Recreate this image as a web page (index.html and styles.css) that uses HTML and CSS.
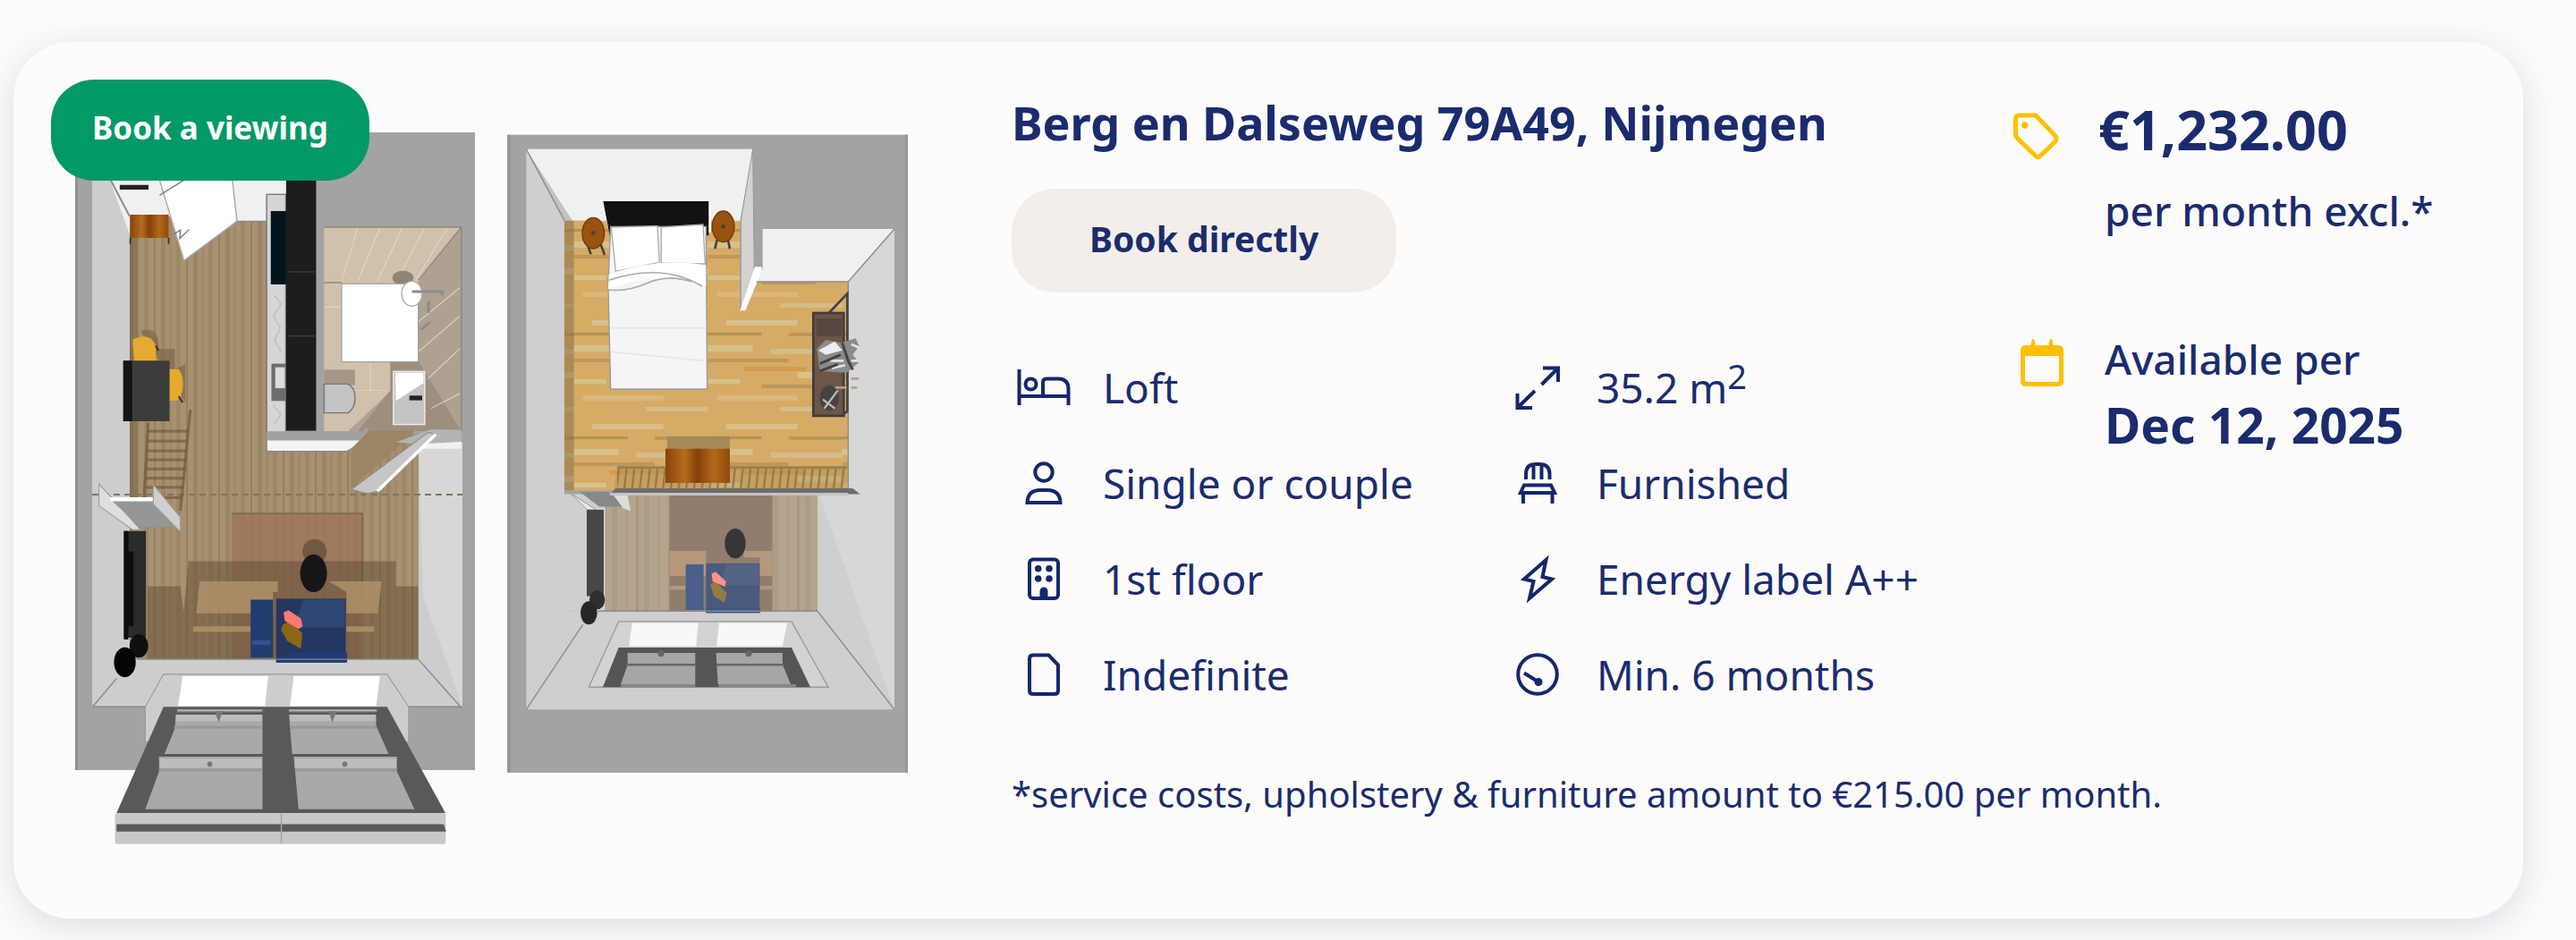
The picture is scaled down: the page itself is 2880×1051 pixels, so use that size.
FILE: index.html
```html
<!DOCTYPE html>
<html lang="en">
<head>
    <meta charset="UTF-8">
    <meta name="viewport" content="width=device-width, initial-scale=1.0">
    <title>Berg en Dalseweg 79A49, Nijmegen</title>
    <link rel="stylesheet" href="styles.css">
</head>
<body>
<article class="card">
    <div class="media">
        <svg class="floorplan" viewBox="57 89 1032 896" role="img" aria-label="Floor plan">
            <defs>
                <pattern id="oak" width="36" height="90" patternUnits="userSpaceOnUse">
                    <rect width="36" height="90" fill="#a89170"/>
                    <rect width="5" height="90" fill="#9b8564"/>
                    <rect x="9" width="3" height="90" fill="#a08a69"/>
                    <rect x="17" width="5" height="90" fill="#9d8766"/>
                    <rect x="28" width="2" height="90" fill="#94805f"/>
                </pattern>
                <pattern id="oak-light" width="36" height="90" patternUnits="userSpaceOnUse" patternTransform="scale(3)">
                    <rect width="36" height="90" fill="#b5a48d"/>
                    <rect width="6" height="90" fill="#ad9c84"/>
                    <rect x="15" width="4" height="90" fill="#b09f88"/>
                    <rect x="27" width="3" height="90" fill="#a9977f"/>
                </pattern>
                <pattern id="parquet" width="150" height="116" patternUnits="userSpaceOnUse" patternTransform="translate(305 0) scale(3)">
                    <rect width="150" height="116" fill="#d5ab66"/>
                    <rect x="20" y="6" width="80" height="6" fill="#d6bf8c"/>
                    <rect y="20" width="60" height="3" fill="#b49256"/>
                    <rect x="90" y="20" width="60" height="4" fill="#bd9759"/>
                    <rect y="34" width="50" height="7" fill="#d8c08a"/>
                    <rect x="70" y="38" width="80" height="6" fill="#d3bd88"/>
                    <rect y="49" width="90" height="4" fill="#bf9858"/>
                    <rect x="40" y="58" width="70" height="5" fill="#d39c4c"/>
                    <rect x="100" y="64" width="50" height="7" fill="#dbc189"/>
                    <rect y="72" width="36" height="5" fill="#d8c28d"/>
                    <rect x="60" y="78" width="60" height="4" fill="#bc965b"/>
                    <rect x="10" y="90" width="90" height="6" fill="#dab77a"/>
                    <rect x="80" y="103" width="70" height="5" fill="#d5bd84"/>
                </pattern>
                <pattern id="rail" y="1208" width="26" height="72" patternUnits="userSpaceOnUse">
                    <path d="M6 72 14 0" stroke="#8d7446" stroke-width="6"/>
                </pattern>
                <linearGradient id="wood" x1="0" x2="1" y1="0" y2="0">
                    <stop offset="0" stop-color="#8a4308"/>
                    <stop offset=".3" stop-color="#b56c1f"/>
                    <stop offset=".5" stop-color="#84400a"/>
                    <stop offset=".75" stop-color="#b4681b"/>
                    <stop offset="1" stop-color="#8e4a0d"/>
                </linearGradient>
            </defs>

            <!-- Ground floor: shell -->
            <rect x="84" y="148" width="447" height="713" fill="#a3a3a3"/>
            <rect x="84" y="148" width="3" height="713" fill="#919191"/>
            <path d="M103 148H145V737H468V495H517V790H103Z" fill="#cdcdcd"/>
            <path d="M468 495H517V790L473 666Z" fill="#d7d7d7"/>
            <path d="M123 202H320V262H145Z" fill="#f0f0f0"/>
            <path d="M145 242H190L206 290 264 248H298V500H410L468 484V737H145Z" fill="url(#oak)"/>
            <rect x="145" y="262" width="9" height="300" fill="#6f5b3c" opacity=".5"/>
            <path d="M123 200 145 242" stroke="#8c8c8c" stroke-width="2"/>
            <path d="M103 553H517" stroke="#7f7363" stroke-width="2" stroke-dasharray="7 5"/>

            <!-- Ground floor: kitchen and shower -->
            <g transform="translate(0 20) scale(.357 .3333)">
                <path d="M375 568H465" stroke="#222" stroke-width="16"/>
                <rect x="408" y="660" width="120" height="78" fill="url(#wood)"/>
                <path d="M408 738V758M528 738V758" stroke="#333" stroke-width="5"/>
                <path d="M500 545H728L742 682 576 814Z" fill="#fff" stroke="#aaa" stroke-width="4"/>
                <path d="M500 595 575 545M545 725 565 712 563 740 592 710" fill="none" stroke="#777" stroke-width="4"/>
                <path d="M742 682H835" stroke="#888" stroke-width="4"/>
                <rect x="835" y="592" width="60" height="800" fill="#d6d6d6" stroke="#777" stroke-width="4"/>
                <path d="M860 930 880 960 856 1000 878 1040 860 1080 880 1120M855 1300 880 1330 860 1360" stroke="#c2c2c2" stroke-width="5" fill="none"/>
                <rect x="848" y="648" width="48" height="246" fill="#04141f"/>
                <rect x="850" y="1160" width="45" height="125" fill="#6d6d6d"/>
                <rect x="862" y="1172" width="30" height="70" fill="#ddd"/>
                <rect x="896" y="540" width="94" height="845" fill="#1d1d1d"/>
                <path d="M905 852H985M905 1067H985" stroke="#3a3a3a" stroke-width="5"/>
                <rect x="1015" y="702" width="430" height="685" fill="#d1c0ab"/>
                <path d="M1445 702V1387H1090L1225 1250 1310 1160V885Z" fill="#aea190"/>
                <path d="M1120 1387 1222 1250V1150H1310L1445 1387Z" fill="#9d8f7e"/>
                <path d="M1120 705 1070 885M1190 705 1120 885M1260 705 1180 885M1330 705 1240 885M1400 705 1300 885M1015 970H1070M1160 1160V1250M1310 1020 1440 905M1310 1120 1440 1000M1340 1210 1440 1110M1350 1310 1440 1260M1015 1250H1210" stroke="#e2d6c5" stroke-width="3" fill="none"/>
                <path d="M1015 702H1445V1387M1445 702 1310 880M1015 888H1070" stroke="#8f8679" stroke-width="4" fill="none"/>
                <ellipse cx="1262" cy="872" rx="33" ry="24" fill="#8f8577"/>
                <rect x="1070" y="892" width="240" height="262" fill="#fff" stroke="#999" stroke-width="3"/>
                <ellipse cx="1290" cy="925" rx="32" ry="42" fill="#fff" stroke="#aaa" stroke-width="4"/>
                <path d="M1290 918H1385V930M1342 950V990M1318 1045 1348 1020" stroke="#8a8d92" stroke-width="9" fill="none"/>
                <rect x="1015" y="1180" width="97" height="52" fill="#a59786"/>
                <path d="M1015 1228H1090Q1112 1240 1112 1275T1090 1325H1015Z" fill="#c4c4c4" stroke="#777" stroke-width="4"/>
                <rect x="1232" y="1186" width="98" height="178" fill="#c4c4c4" stroke="#eee" stroke-width="4"/>
                <path d="M1238 1190H1326V1225L1240 1285Z" fill="#fff"/>
                <path d="M1282 1275H1322" stroke="#222" stroke-width="16"/>
            </g>

            <!-- Ground floor: dining table -->
            <g transform="translate(0 20) scale(.357 .3333)">
                <path d="M440 1050Q500 1030 497 1110H548V1180L580 1160V1290" fill="#7c6848" opacity=".7"/>
                <path d="M415 1080Q470 1050 488 1100V1150H420Z" fill="#e7a92f"/>
                <path d="M530 1178H560Q575 1200 573 1235T555 1284H530Z" fill="#e7a92f"/>
                <path d="M488 1100 496 1116M560 1270 572 1290" stroke="#333" stroke-width="6"/>
                <rect x="386" y="1150" width="145" height="203" fill="#3c3c3c"/>
                <rect x="386" y="1150" width="28" height="203" fill="#151515"/>
            </g>

            <!-- Ground floor: living room -->
            <g transform="translate(0 480) scale(.357 .3642)">
                <path d="M464-20 450 230M596-60 565 250" stroke="#6e5a3c" stroke-width="9" opacity=".7"/>
                <path d="M464 6H590M464 36H588M462 66H586M460 94H584M458 122H580M456 150H578M454 178H574M500 210H570" stroke="#6e5a3c" stroke-width="9" opacity=".65"/>
                <path d="M835 30H1155L1085 68H835Z" fill="#f4f4f4" stroke="#888" stroke-width="4"/>
                <path d="M835 6H1135L1148-8 1155 0V25L1130 34H835Z" fill="#a0a0a0"/>
                <path d="M1155 5 1100 60V180L1240 60 1300 5Z" fill="#9a8564"/>
                <path d="M1240 40 1350 0 1445 2V45H1310Z" fill="#b3b3b3"/>
                <path d="M1310 45 1445 38V60H1310Z" fill="#f1f1f1"/>
                <path d="M1100 185 1340 10 1365 15 1182 190 1150 197Z" fill="#c6c6c6" stroke="#8b8b8b" stroke-width="3"/>
                <path d="M1365 15 1182 190" stroke="#fff" stroke-width="10"/>
                <rect x="725" y="258" width="410" height="448" fill="#9c7359" opacity=".75"/>
                <path d="M725 258H1135V520" stroke="#6d5845" stroke-width="3" fill="none"/>
                <path d="M590 405H1240V482H1310V706H462V482H565L575 560Z" fill="#594630" opacity=".45"/>
                <path d="M625 467H870V500H855V565H615ZM1030 467H1195L1183 565H1085V500ZM605 605H785V622H605ZM1085 605H1172V622H1085Z" fill="#b3936c" opacity=".8"/>
                <ellipse cx="985" cy="375" rx="38" ry="38" fill="#715845"/>
                <ellipse cx="982" cy="442" rx="42" ry="58" fill="#161616"/>
                <rect x="785" y="523" width="70" height="178" fill="#233c70"/>
                <rect x="865" y="520" width="218" height="196" fill="#233760"/>
                <path d="M950 523H1080V608H920Z" fill="#2e4674"/>
                <path d="M922 686H1087V716H865V700Z" fill="#213c76"/>
                <path d="M790 655H848" stroke="#345193" stroke-width="14"/>
                <path d="M885 600 905 590 947 625 942 674 900 650 880 615Z" fill="#8c6717"/>
                <path d="M888 562 903 555 942 580 948 605 935 613 892 588Z" fill="#fb7a70"/>
                <path d="M310 168 345 205 440 308H415L310 235Z" fill="#dedede" stroke="#999" stroke-width="3"/>
                <path d="M345 215H480L540 300H440Z" fill="#969696"/>
                <path d="M345 215H480" stroke="#fff" stroke-width="12"/>
                <path d="M480 170 565 270V315L480 230Z" fill="#cfcfcf" stroke="#999" stroke-width="3"/>
                <path d="M388 312H457V640H388Z" fill="#2b2b2b"/>
                <path d="M388 312H402V645H388M402 375H418V605H402" fill="#0d0d0d"/>
                <ellipse cx="435" cy="665" rx="29" ry="36" fill="#101010"/>
                <ellipse cx="391" cy="715" rx="34" ry="46" fill="#050505"/>
                <path d="M290 852 365 765M1310 706 1446 856M290 852H455M1280 852H1446M430 706H1310" stroke="#8a8a8a" stroke-width="4" fill="none"/>
                <!-- Roof window -->
                <path d="M512 752H1212L1280 852V960H455V852Z" fill="#cdcdcd" stroke="#999" stroke-width="3"/>
                <path d="M572 758H840L830 850H558ZM920 758H1190L1178 850H908Z" fill="#fff"/>
                <path d="M512 852H1212L1395 1178H365Z" fill="#595959"/>
                <path d="M550 875H822V997H515L548 918ZM905 875H1178V910L1217 997H915ZM498 1005H822V1166H455L498 1050ZM920 1005H1243V1050L1298 1166H935Z" fill="#a9a9a7"/>
                <path d="M552 882H820M908 882H1176M500 1025H820M923 1025H1241" stroke="#bdbdbd" stroke-width="28"/>
                <path d="M555 863H822M905 863H1180" stroke="#b5b5b5" stroke-width="6"/>
                <path d="M550 872H822M905 872H1180" stroke="#595959" stroke-width="8"/>
                <path d="M545 915H820M910 915H1180M498 1046H820M925 1046H1243" stroke="#989898" stroke-width="8"/>
                <path d="M672 865H698L685 900ZM1028 865H1054L1041 900Z" fill="#777"/>
                <circle cx="657" cy="1028" r="8" fill="#777"/>
                <circle cx="1080" cy="1028" r="8" fill="#777"/>
                <rect x="360" y="1178" width="1036" height="95" rx="8" fill="#c8c8c8"/>
                <path d="M365 1212H1390L1397 1235H365Z" fill="#595959"/>
                <path d="M881 1180V1272" stroke="#a5a5a5" stroke-width="4"/>
            </g>

            <!-- Upper floor -->
            <g transform="translate(540 120) scale(.3333)">
                <rect x="82" y="92" width="1343" height="2140" fill="#a3a3a3"/>
                <rect x="82" y="92" width="9" height="2140" fill="#919191"/>
                <rect x="1416" y="92" width="9" height="2140" fill="#999"/>
                <path d="M145 140H905L862 380H273V1690H1122V1290L1225 1275V585L1380 408V2020H145Z" fill="#cfcfcf"/>
                <path d="M1225 585 1380 408V2020L1125 1290H1225Z" fill="#d7d7d7"/>
                <path d="M145 140H905L862 380H273Z" fill="#f0f0f0"/>
                <path d="M145 140 273 380H300Z" fill="#c2c2c2"/>
                <path d="M938 408H1380L1225 585H918L938 540Z" fill="#f0f0f0"/>
                <path d="M273 380H862V680L920 585H1225V1285H273Z" fill="url(#parquet)"/>
                <rect x="273" y="380" width="32" height="905" fill="#6d5a3a" opacity=".4"/>
                <path d="M905 140 910 550 865 680V380Z" fill="#d2d2d2" stroke="#999" stroke-width="3"/>
                <path d="M912 535H935V550L880 682H862Z" fill="#fff"/>
                <path d="M145 140 273 380M1380 408 1225 585M918 585H1225V1285" stroke="#8b8b8b" stroke-width="4" fill="none"/>
                <!-- Bed and nightstands -->
                <path d="M392 310H765V420H425Z" fill="#fff"/>
                <path d="M403 315H757V430H425Z" fill="#121212"/>
                <path d="M428 400H748L752 945H428L420 600Z" fill="#f5f5f5" stroke="#999" stroke-width="4"/>
                <path d="M430 402 585 398 592 520 445 550ZM598 402 738 393 745 525 598 522Z" fill="#fff" stroke="#aaa" stroke-width="4"/>
                <path d="M422 560Q600 500 748 530V600Q600 540 420 610Z" fill="#fff"/>
                <path d="M422 580Q600 520 735 600M420 612Q480 620 550 590T700 585" stroke="#aaa" stroke-width="5" fill="none"/>
                <path d="M430 740H750M430 820 740 850" stroke="#e6e6e6" stroke-width="5" fill="none"/>
                <path d="M352 465 362 493M395 460 408 495M785 445 778 475M822 445 828 475" stroke="#444" stroke-width="8"/>
                <ellipse cx="370" cy="422" rx="37" ry="52" fill="#9a520f" stroke="#6d3a0b" stroke-width="4"/>
                <ellipse cx="806" cy="400" rx="37" ry="52" fill="#9a520f" stroke="#6d3a0b" stroke-width="4"/>
                <circle cx="370" cy="422" r="7" fill="#444"/>
                <circle cx="806" cy="400" r="7" fill="#444"/>
                <!-- Clothes rack -->
                <path d="M1160 690 1222 625V1020L1200 1035" stroke="#444" stroke-width="8" fill="none"/>
                <rect x="1108" y="690" width="102" height="345" fill="#6d5547" stroke="#403c3c" stroke-width="8"/>
                <rect x="1118" y="708" width="85" height="60" fill="#57463f"/>
                <path d="M1120 810 1150 780 1200 790 1250 775 1262 800 1240 830 1262 855 1220 890 1130 885Z" fill="#8b8b8b"/>
                <path d="M1125 815 1180 785 1205 815 1150 830Z" fill="#eee"/>
                <path d="M1165 850H1210M1170 875 1215 865M1235 795 1260 805M1235 850H1262" stroke="#e4e4e4" stroke-width="8"/>
                <path d="M1180 940H1220M1235 910H1260M1235 940H1255" stroke="#b79c8c" stroke-width="8"/>
                <path d="M1205 790 1225 850 1240 880M1130 860 1200 830M1130 885 1190 862" stroke="#444" stroke-width="9" fill="none"/>
                <ellipse cx="1162" cy="975" rx="32" ry="42" fill="#444"/>
                <path d="M1145 1010 1190 950M1140 980 1180 1010" stroke="#bbb" stroke-width="7"/>
                <!-- Cabinet and railing -->
                <path d="M450 1205H1222V1280H440Z" fill="#a58a55" opacity=".35"/>
                <rect x="450" y="1208" width="772" height="72" fill="url(#rail)"/>
                <path d="M450 1208H1222" stroke="#98824f" stroke-width="9"/>
                <path d="M618 1103H828V1145H618Z" fill="#a38a57"/>
                <rect x="612" y="1145" width="216" height="115" fill="url(#wood)"/>
                <!-- View down to the living room -->
                <rect x="410" y="1298" width="712" height="392" fill="url(#oak-light)"/>
                <rect x="626" y="1298" width="345" height="392" fill="#907d6e"/>
                <path d="M626 1488H748V1572H626ZM875 1488H971V1572H928V1510H875ZM626 1605H680V1618H626ZM930 1605H971V1618H930Z" fill="#b5977c"/>
                <path d="M273 1298H410V1690H273Z" fill="#cfcfcf"/>
                <path d="M295 1296 380 1350H350Z" fill="#e8e8e8" stroke="#999" stroke-width="3"/>
                <path d="M325 1290H420L480 1340H390Z" fill="#888"/>
                <path d="M430 1290 485 1300 495 1355 470 1345Z" fill="#dcdcdc"/>
                <path d="M445 1278H1240L1265 1298H425Z" fill="#6d6d6d"/>
                <path d="M425 1298H1225" stroke="#c4c4c8" stroke-width="9"/>
                <rect x="348" y="1350" width="57" height="290" fill="#474747"/>
                <ellipse cx="383" cy="1652" rx="26" ry="32" fill="#2f2f2f"/>
                <ellipse cx="355" cy="1696" rx="28" ry="39" fill="#272727"/>
                <ellipse cx="846" cy="1463" rx="35" ry="50" fill="#363636"/>
                <rect x="680" y="1533" width="60" height="153" fill="#4a5f8b"/>
                <rect x="748" y="1530" width="180" height="166" fill="#4a5a7c"/>
                <path d="M815 1533H925V1603H795Z" fill="#536488"/>
                <path d="M748 1680H930V1696H748Z" fill="#3f5588"/>
                <path d="M762 1600 780 1590 818 1630 810 1662 775 1640Z" fill="#957b42"/>
                <path d="M767 1565 780 1558 815 1590 812 1608 770 1590Z" fill="#fb938a"/>
                <path d="M145 2020 335 1735M1122 1690 1380 2020M385 1690H1122" stroke="#8a8a8a" stroke-width="4" fill="none"/>
                <!-- Roof window -->
                <path d="M455 1725H1035L1158 1945H355Z" fill="#d3d3d3" stroke="#9a9a9a" stroke-width="4"/>
                <path d="M500 1730H722L715 1808H490ZM792 1730H1020L1005 1808H784Z" fill="#f8f8f8"/>
                <path d="M455 1812H1035L1098 1945H402Z" fill="#555"/>
                <path d="M485 1830H712V1935H462L485 1870ZM782 1830H1005V1870L1032 1935H788Z" fill="#a6a6a5"/>
                <path d="M480 1870H712M784 1870H1010" stroke="#666" stroke-width="7"/>
                <path d="M462 1940H712M790 1940H1050" stroke="#888" stroke-width="10"/>
                <circle cx="597" cy="1832" r="11" fill="#666"/>
                <circle cx="891" cy="1832" r="11" fill="#666"/>
            </g>
        </svg>
        <button class="badge" type="button">Book a viewing</button>
    </div>

    <div class="details">
        <h2 class="title">Berg en Dalseweg 79A49, Nijmegen</h2>
        <button class="book-button" type="button">Book directly</button>
        <ul class="features">
            <li>
                <svg class="icon" viewBox="0 0 72 64"><path d="M8.500 12V52M8.500 42H63.500M35 42V26.500Q35 22.500 39 22.500H52Q63.500 22.500 63.500 34V52"/><circle cx="21.500" cy="28.500" r="6"/></svg>
                <span>Loft</span>
            </li>
            <li>
                <svg class="icon" viewBox="0 0 72 64"><path d="M13.500 39V55H30M13.500 55 33 36M42 10.500H59V26M59 10.500 40.500 29"/></svg>
                <span>35.2 m<sup>2</sup></span>
            </li>
            <li>
                <svg class="icon" viewBox="0 0 72 64"><circle cx="36" cy="20" r="9.700"/><path d="M17.500 54Q18 40 32 40H40Q54 40 54.500 54Z"/></svg>
                <span>Single or couple</span>
            </li>
            <li>
                <svg class="icon" viewBox="0 0 72 64"><path d="M23 28V22Q23 11 34 11H38Q49.500 11 49.500 22V28M31.500 12V28M40.500 12V28M21 34.500H51L55 43H17ZM20 44V55M52.500 44V55"/></svg>
                <span>Furnished</span>
            </li>
            <li>
                <svg class="icon" viewBox="0 0 72 64"><rect x="20" y="10.500" width="32" height="43.500" rx="4"/><path class="solid" d="M31.500 55V46Q32 41.500 36 41.500T40.500 46V55Z"/><circle class="solid" cx="29.700" cy="20.700" r="3.800"/><circle class="solid" cx="42" cy="20.700" r="3.800"/><circle class="solid" cx="29.700" cy="32" r="3.800"/><circle class="solid" cx="42" cy="32" r="3.800"/></svg>
                <span>1st floor</span>
            </li>
            <li>
                <svg class="icon" viewBox="0 0 72 64"><path d="M45.500 11 21 32.500 31.500 35 27 54 52 32.500 41.500 30Z"/></svg>
                <span>Energy label A++</span>
            </li>
            <li>
                <svg class="icon" viewBox="0 0 72 64"><path d="M24 10.500H41.500L52 21.500V50Q52 54 48 54H24Q20 54 20 50V14.500Q20 10.500 24 10.500Z"/></svg>
                <span>Indefinite</span>
            </li>
            <li>
                <svg class="icon" viewBox="0 0 72 64"><circle cx="36" cy="32" r="21.800"/><path d="M21 30.500 37 40.500"/><circle class="solid" cx="37" cy="40.500" r="4.500"/></svg>
                <span>Min. 6 months</span>
            </li>
        </ul>
    </div>

    <aside class="summary">
        <div class="price-row">
            <svg class="tag-icon" viewBox="0 0 64 64"><path d="M31 8 53 31Q55 34 53 37L36 53.500Q33.500 56 31 53.500L10 33Q8.500 31.500 8.500 29V12Q8.500 8 12.500 8Z"/><circle cx="18.700" cy="19" r="3.800"/></svg>
            <strong class="price">€1,232.00</strong>
        </div>
        <p class="period">per month excl.*</p>
        <div class="availability">
            <svg class="calendar-icon" viewBox="0 0 76 76"><path fill-rule="evenodd" d="M25.500 17Q26 10 28 10T30.500 17H45.500Q46 10 48 10T50.500 17H56Q62 17 62 23V57Q62 63 56 63H20Q14 63 14 57V23Q14 17 20 17ZM19 29V56Q19 58 21 58H55Q57 58 57 56V29Z"/></svg>
            <div>
                <p>Available per</p>
                <strong class="date">Dec 12, 2025</strong>
            </div>
        </div>
    </aside>

    <p class="footnote">*service costs, upholstery &amp; furniture amount to €215.00 per month.</p>
</article>
</body>
</html>
```
FILE: styles.css
```css
* {
    box-sizing: border-box;
}

body {
    margin: 0;
    padding: 47px 59px 24px 15px;
    background-color: #fdfcfb;
    color: #1a2c6e;
    font-family: "Noto Sans", sans-serif;
    font-size: 46px;
    line-height: 64px;
}

h2, p, ul {
    margin: 0;
    padding: 0;
}

button {
    border: none;
    border-radius: 48px;
    font-family: inherit;
    font-weight: 700;
    cursor: pointer;
}

.card {
    position: relative;
    display: grid;
    grid-template-columns: 1032fr 1072fr 534fr;
    grid-template-rows: auto 1fr;
    column-gap: 42px;
    padding: 42px;
    border-radius: 64px;
    background-color: #fdfcfb;
    box-shadow: 0 8px 40px rgba(20, 39, 107, 0.15);
}

.media {
    grid-row: 1 / 3;
}

.floorplan {
    display: block;
    width: 100%;
}

/* Sits on top of the floor plan */
.badge {
    position: absolute;
    top: 42px;
    left: 42px;
    padding: 30px 46px 35px;
    background-color: #029967;
    color: white;
    font-size: 35px;
    line-height: 48px;
}

.details, .summary {
    padding-top: 16px;
}

.title {
    font-size: 52px;
    font-weight: 700;
    line-height: 64px;
}

.book-button {
    display: block;
    margin: 42px 0 74px;
    padding: 24px 87px 28px;
    background-color: #f3eee9;
    color: #1a2c6e;
    font-size: 39px;
    line-height: 64px;
}

/* Feature list */
.features {
    display: grid;
    grid-template-columns: 552fr 520fr;
    row-gap: 43px;
    list-style: none;
}

.features li {
    display: flex;
    align-items: center;
    gap: 30px;
}

sup {
    font-size: 38px;
    line-height: 0;
}

.icon {
    width: 72px;
    height: 64px;
    fill: none;
    stroke: #14276b;
    stroke-width: 4;
}

.icon .solid {
    fill: #14276b;
    stroke: none;
}

/* Price and availability */
.price-row {
    display: flex;
    align-items: flex-end;
    gap: 37px;
}

.tag-icon {
    width: 64px;
    height: 64px;
    fill: none;
    stroke: #ffbf00;
    stroke-width: 5;
}

.tag-icon circle {
    fill: #ffbf00;
    stroke: none;
}

.price {
    font-size: 61px;
    font-weight: 700;
    line-height: 80px;
}

.period {
    padding: 18px 0 102px 108px;
}

.availability {
    display: flex;
    gap: 32px;
}

.calendar-icon {
    width: 76px;
    height: 76px;
    fill: #ffbf00;
}

.date {
    display: block;
    margin-top: 10px;
    font-size: 55px;
    font-weight: 700;
}

.period, .availability p {
    font-weight: 500;
}

.footnote {
    grid-column: 2 / 4;
    padding-top: 70px;
    font-size: 40px;
}
```
